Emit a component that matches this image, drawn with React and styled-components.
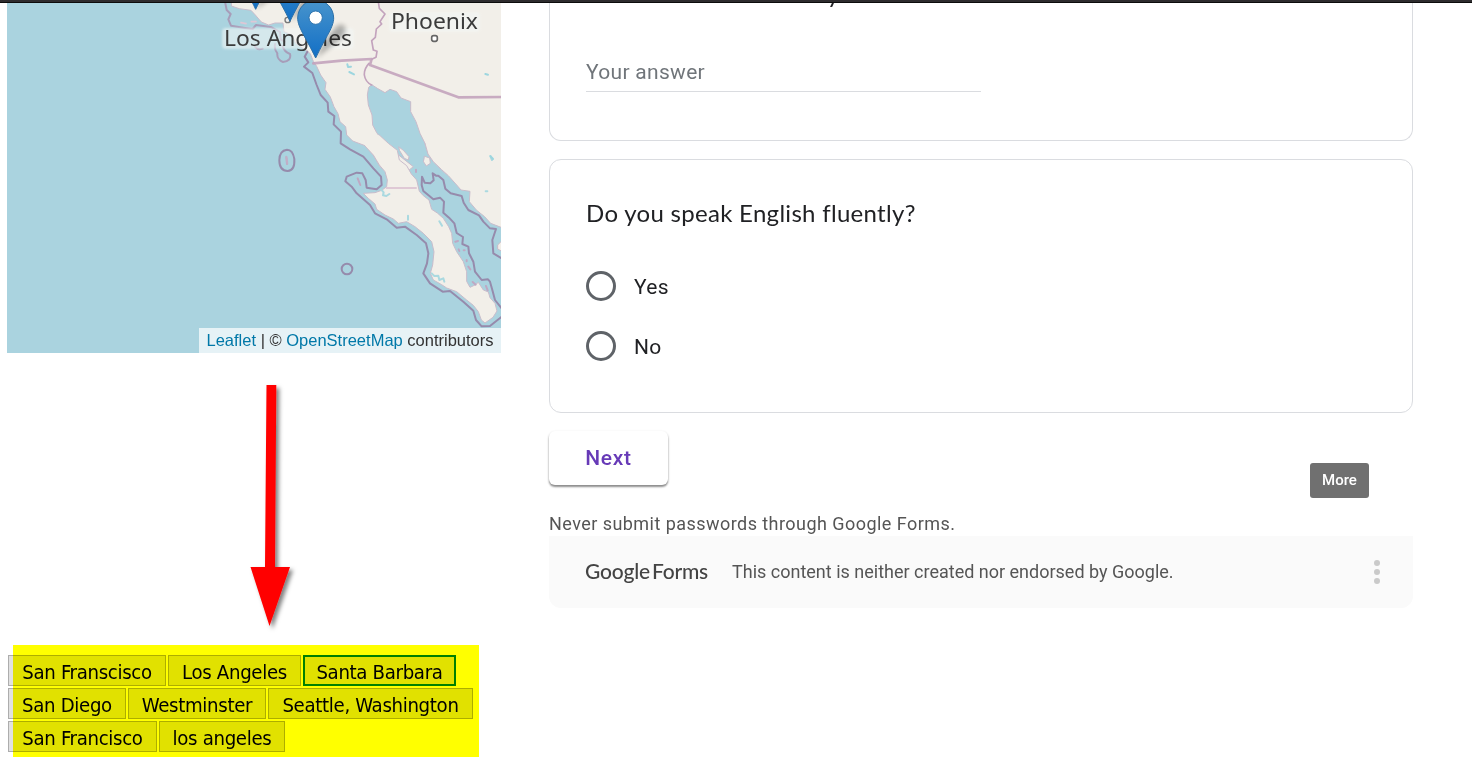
import React from "react";
import styled, { createGlobalStyle } from "styled-components";

const Global = createGlobalStyle`
  * { box-sizing: border-box; }
  body { margin: 0; background: #fff; font-family: Roboto, "Liberation Sans", sans-serif; overflow: hidden; }
`;
const Page = styled.div`
  width: 1472px;
  height: 761px;
  overflow: hidden;
  display: flex;
  flex-direction: column;
`;
const TopBar = styled.header`
  flex: none;
  height: 3px;
  background: #2e2c2e;
  border-bottom: 1px solid #0c0c0c;
`;
const Columns = styled.main`
  display: flex;
  gap: 48px;
  padding-left: 7px;
  flex: 1;
  min-height: 0;
`;
const Left = styled.section`
  width: 494px;
  flex: none;
`;
const MapBox = styled.div`
  position: relative;
  height: 350px;
  overflow: hidden;
  background: #aad3df;
`;
const MapArt = styled.svg`
  display: block;
`;
const Attribution = styled.div`
  position: absolute;
  right: 0;
  bottom: 0;
  width: 302px;
  height: 25px;
  padding: 0 7.5px;
  background: rgba(255, 255, 255, 0.7);
  font: 16.5px/25px "Liberation Sans", sans-serif;
  color: #333;
  white-space: nowrap;
`;
const MapLink = styled.a`
  color: #0078a8;
`;
const ArrowBox = styled.div`
  height: 292px;
  padding: 24px 0 0 233px;
`;
const Arrow = styled.svg`
  display: block;
`;
const TagArea = styled.div`
  position: relative;
  padding: 10px 0 0 1px;
  height: 112px;
`;
const Marker = styled.div`
  position: absolute;
  left: 6px;
  top: 0;
  width: 466px;
  height: 112px;
  background: #ff0;
  mix-blend-mode: multiply;
`;
const TagRow = styled.div`
  display: flex;
  gap: 2px;
  margin-bottom: 2px;
`;
const Tag = styled.button`
  width: ${(p) => p.$w}px;
  height: 31px;
  flex: none;
  padding: 2px 0 0;
  border: ${(p) => (p.$active ? "2px solid #008000" : "1px solid #adadad")};
  background: #e1e1e1;
  color: #000;
  font: 20.2px/26px "DejaVu Sans Condensed", "DejaVu Sans", sans-serif;
  font-stretch: condensed;
  letter-spacing: -0.33px;
  white-space: nowrap;
  display: flex;
  align-items: center;
  justify-content: center;
`;
const Form = styled.section`
  width: 864px;
`;
const Card = styled.article`
  border: 1px solid #dadce0;
  border-radius: 12px;
  padding: 0 36px;
`;
const AnswerCard = styled(Card)`
  height: 138px;
  border-top: 0;
  border-radius: 0 0 12px 12px;
`;
const CutHeading = styled.div`
  height: 5px;
  overflow: hidden;
  padding-left: 241px;
  display: flex;
  align-items: flex-end;
  font: 24px/24px Lato, sans-serif;
  color: #202124;
  span { margin-bottom: 2px; }
`;
const Answer = styled.div`
  width: 395px;
  height: 84px;
  padding-top: 48px;
  border-bottom: 1px solid #dadce0;
  color: #70757a;
  font-size: 21px;
  line-height: 32px;
  letter-spacing: 0.3px;
`;
const QuestionCard = styled(Card)`
  margin-top: 18px;
  height: 254px;
`;
const Question = styled.h2`
  margin: 35px 0 0;
  font: 400 24px/36px Lato, sans-serif;
  letter-spacing: 0.3px;
  color: #202124;
  white-space: nowrap;
`;
const Option = styled.label`
  display: flex;
  align-items: center;
  gap: 18px;
  height: 30px;
  margin-top: ${(p) => (p.$first ? 40 : 30)}px;
  color: #202124;
  font-size: 21px;
  line-height: 24px;
  letter-spacing: 0.3px;
`;
const OptionText = styled.span`
  padding-top: 2px;
`;
const Radio = styled.span`
  width: 30px;
  height: 30px;
  border: 3px solid #5f6368;
  border-radius: 50%;
`;
const Actions = styled.div`
  display: flex;
  justify-content: space-between;
  align-items: flex-start;
  margin-top: 18px;
  padding-right: 44px;
`;
const NextButton = styled.button`
  width: 119px;
  height: 54px;
  padding: 0;
  border: 0;
  border-radius: 6px;
  background: #fff;
  box-shadow: 0 2px 2px rgba(0, 0, 0, 0.4), 0 1px 3px rgba(0, 0, 0, 0.12);
  color: #673ab7;
  font: 500 21px/54px Roboto, sans-serif;
  letter-spacing: 0.7px;
`;
const Tooltip = styled.div`
  width: 59px;
  height: 35px;
  margin-top: 32px;
  border-radius: 3px;
  background: #707070;
  color: #fff;
  text-align: center;
  font: 500 15px/34px Roboto, sans-serif;
`;
const Notice = styled.p`
  margin: 14px 0 0;
  height: 24px;
  color: #555;
  font-size: 18px;
  line-height: 24px;
  letter-spacing: 0.45px;
  white-space: nowrap;
`;
const Footer = styled.footer`
  height: 72px;
  display: flex;
  align-items: center;
  padding: 0 33px 0 36px;
  background: #fafafa;
  border-radius: 0 0 12px 12px;
  color: #555;
  font-size: 18px;
  white-space: nowrap;
`;
const Logo = styled.div`
  width: 147px;
  display: flex;
  gap: 2px;
  padding-bottom: 2px;
  color: #444;
  font: 500 21px/24px Lato, sans-serif;
  letter-spacing: -0.2px;
`;
const Disclaimer = styled.span`
  padding-bottom: 2px;
`;
const Dots = styled.svg`
  margin-left: auto;
`;

const tagRows = [
  [["San Franscisco", 158], ["Los Angeles", 133], ["Santa Barbara", 153, true]],
  [["San Diego", 118], ["Westminster", 138], ["Seattle, Washington", 205]],
  [["San Francisco", 149], ["los angeles", 126]],
];

function Pin({ x, y }) {
  return (
    <g transform={`translate(${x} ${y})`}>
      <path d="M2 -1 C18 -35 40 -75 68 -98 C92 -108 98 -78 72 -55 Z" fill="#000" opacity=".3" filter="url(#soft)" />
      <path d="M-54 -120 A54 54 0 0 1 54 -120 C54 -92 32 -67 0 0 C-32 -67 -54 -92 -54 -120Z" fill="url(#pin)" stroke="#2c6fa8" strokeWidth="3" />
      <circle cy="-121" r="20" fill="#fff" stroke="#2d72ad" strokeWidth="3" />
    </g>
  );
}

function CoastMap() {
  return (
    <MapArt width="494" height="350" viewBox="7 3 494 350">
      <defs>
        <linearGradient id="pin" x1="0" y1="0" x2="0" y2="1">
          <stop offset="0" stopColor="#4894cc" />
          <stop offset="1" stopColor="#126fc6" />
        </linearGradient>
        <filter id="soft" x="-30%" y="-30%" width="160%" height="160%">
          <feGaussianBlur stdDeviation="8" />
        </filter>
        <filter id="tile">
          <feGaussianBlur stdDeviation="0.5" />
        </filter>
        <filter id="halo" x="-10%" y="-30%" width="120%" height="160%">
          <feGaussianBlur stdDeviation="0.9" />
        </filter>
      </defs>
      <g filter="url(#tile)">
      <g transform="translate(200 0) scale(.333333)" strokeLinejoin="round" strokeLinecap="round">
        <g fill="#f2efe9" stroke="#c9bccb" strokeWidth="3">
          <path d="M95 -10 L94 18 118 26 153 31 166 45 184 66 206 75 225 69 249 69 252 95 276 105 287 130 316 150 331 161 340 184 350 199 362 225 378 248 375 268 391 291 402 320 414 341 420 365 437 380 440 405 458 423 495 437 520 465 540 500 560 515 590 540 640 500 558 435 530 398 518 375 516 345 505 315 502 285 506 262 515 254 532 265 555 278 570 268 590 275 603 294 632 305 632 335 648 365 660 400 675 430 684 462 700 485 735 520 910 590 910 -10Z" />
        </g>
        <g transform="translate(180 390)">
          <path d="M357 14 L385 40 412 61 418 90 440 107 454 132 470 150 478 184 490 197 507 210 515 238 532 249 550 265 566 290 575 310 578 340 590 365 610 395 620 425 620 454 630 472 645 465 655 457 670 480 685 486 690 503 705 520 711 543 699 562 675 579 664 570 655 545 640 526 620 510 590 485 560 474 545 464 520 450 511 430 518 405 522 365 515 335 490 310 465 290 440 275 415 280 400 267 375 255 350 238 345 222 325 205 310 190 345 188 365 181 380 170 382 150 375 125 358 105 340 75 315 48" fill="#f2efe9" stroke="#c9bccb" strokeWidth="3" />
          <path d="M495 40 L504 72 520 95 545 119 565 137 590 165 603 180 630 184 628 215 650 241 674 260 692 280 723 292 740 292 740 40" fill="#f2efe9" stroke="#c9bccb" strokeWidth="3" />
          <path d="M417 51 l13 10 17 19 -2 10 -12 -5 -14 -23Z M494 79 l15 5 2 16 -12 8 -8-12Z M728 330 L713 345 713 357 728 365Z" fill="#f2efe9" stroke="#c9bccb" strokeWidth="3" />
          <path d="M380 174H468" stroke="#dfc9d5" strokeWidth="6" />
          <path d="M362 177l9 10-2 9 10 2 9-6M444 257v12M538 274l8 13M515 430l8 8 12-1 3 13 12-5 3 10M677 184h5M691 78l5 12" fill="none" stroke="#aad9e0" strokeWidth="6" />
          <path d="M586 335l8-2M596 358l2 5M611 361h3M620 390v4M625 410l6 8M638 456l9 8M678 468l5 13M468 119v7M293 145l8 20M79 82l2 20" fill="none" stroke="#bfa8c3" strokeWidth="6" />
        </g>
        <g fill="none" stroke="#9483a6" strokeOpacity=".9" strokeWidth="6">
          <path d="M75 5 L80 30 92 42 85 58 93 77 130 83 158 87 168 75 195 79 215 82 240 96 242 118 254 125M225 132 Q222 148 232 160 Q230 178 249 186 Q275 183 270 162 Q252 155 248 138M165 140q9 12 23 6" stroke="#a797b5" />
          <path d="M322 155 L314 170 325 187 312 200 337 219 350 255 362 285 383 308 385 335 403 348 401 373 423 395 422 430 450 448 490 470 520 505 543 530 545 555 530 568 500 563 497 540 487 520 470 518 440 530 436 544 455 560 470 580 510 615 525 640 560 658 590 683 615 680 650 705 678 730 685 760 681 790 670 820 690 850 728 875 750 873 790 905 820 932 828 960 845 979 870 978 905 950" />
          <path d="M261 449C244 451 238 464 238 481 238 502 247 513 263 513 279 512 284 495 283 477 280 458 273 449 261 449Z" />
          <path d="M259 470l3 21" stroke="#c2aec8" />
          <g transform="translate(180 390)">
            <path d="M725 535 L705 510 697 480 690 455 684 448 665 450 645 425 640 395 627 370 625 350 607 342 609 321 590 309 583 280 567 263 550 248 552 215 540 203 520 208 490 183 485 165 486 140 494 158 511 160 521 151 518 130 528 137 535 137 550 150 556 176 572 190 605 198 611 218 625 240 657 256 670 275 690 295 708 297 697 330 700 370 725 385" />
            <circle cx="261" cy="417" r="16" />
          </g>
        </g>
        <g fill="none" stroke="#c3a3bd">
          <path d="M535 5 L538 25 555 42 540 65 545 72 529 87 526 112 515 122 520 150 531 154 528 172 515 178M507 190 Q492 206 493 225 Q496 246 515 255" strokeWidth="5" />
          <path d="M340 190 L425 182 515 177 510 195 775 292 910 291" strokeWidth="8" strokeOpacity=".9" />
        </g>
        <path d="M442 193l2 8 9-1M448 216l14 7M856 222l8 2M872 469l7 8" fill="none" stroke="#9dd6df" strokeWidth="6" />
        <path d="M123 68l15 3M154 65h14" stroke="#dec7d6" strokeWidth="5" />
        <circle cx="263" cy="60" r="8" fill="#eee" stroke="#777" strokeWidth="4" />
        <rect x="695" y="107" width="17" height="17" rx="6" fill="#fff" stroke="#666" strokeWidth="5" />
      </g>
      </g>
      <g fill="#f3f7f6" opacity=".6" filter="url(#halo)">
        <rect x="222" y="28" width="132" height="21" rx="4" />
        <rect x="389" y="12" width="91" height="20" rx="4" />
      </g>
      <g fontFamily="Noto Sans, Open Sans, sans-serif" fontSize="22.5" fill="#3b3b3b">
        <text x="224" y="46" textLength="128" lengthAdjust="spacingAndGlyphs">Los Angeles</text>
        <text x="391" y="29" textLength="87" lengthAdjust="spacingAndGlyphs">Phoenix</text>
      </g>
      <g transform="translate(200 0) scale(.333333)">
        <Pin x={167} y={28} />
        <Pin x={270} y={64} />
        <Pin x={347} y={174} />
      </g>
    </MapArt>
  );
}

export default function App() {
  return (
    <Page>
      <Global />
      <TopBar />
      <Columns>
        <Left>
          <MapBox>
            <CoastMap />
            <Attribution>
              <MapLink>Leaflet</MapLink> | © <MapLink>OpenStreetMap</MapLink> contributors
            </Attribution>
          </MapBox>
          <ArrowBox>
            <Arrow width="70" height="264" viewBox="240 377 70 264">
              <defs>
                <filter id="cast" x="-50%" y="-10%" width="200%" height="125%">
                  <feDropShadow dx="3" dy="3" stdDeviation="2" floodOpacity=".5" />
                </filter>
              </defs>
              <path d="M266.5 385H276.3L275 567H290L269.5 626 250.5 567H265Z" fill="#f00" filter="url(#cast)" />
            </Arrow>
          </ArrowBox>
          <TagArea>
            {tagRows.map((row, i) => (
              <TagRow key={i}>
                {row.map(([name, w, active]) => (
                  <Tag key={name} $w={w} $active={active}>{name}</Tag>
                ))}
              </TagRow>
            ))}
            <Marker />
          </TagArea>
        </Left>
        <Form>
          <AnswerCard>
            <CutHeading><span>y</span></CutHeading>
            <Answer>Your answer</Answer>
          </AnswerCard>
          <QuestionCard>
            <Question>Do you speak English fluently?</Question>
            <Option $first><Radio /><OptionText>Yes</OptionText></Option>
            <Option><Radio /><OptionText>No</OptionText></Option>
          </QuestionCard>
          <Actions>
            <NextButton>Next</NextButton>
            <Tooltip>More</Tooltip>
          </Actions>
          <Notice>Never submit passwords through Google Forms.</Notice>
          <Footer>
            <Logo><span>Google</span><span>Forms</span></Logo>
            <Disclaimer>This content is neither created nor endorsed by Google.</Disclaimer>
            <Dots width="6" height="26" viewBox="0 0 6 26" fill="#cacaca">
              <circle cx="3" cy="4" r="3" />
              <circle cx="3" cy="13" r="3" />
              <circle cx="3" cy="22" r="3" />
            </Dots>
          </Footer>
        </Form>
      </Columns>
    </Page>
  );
}
